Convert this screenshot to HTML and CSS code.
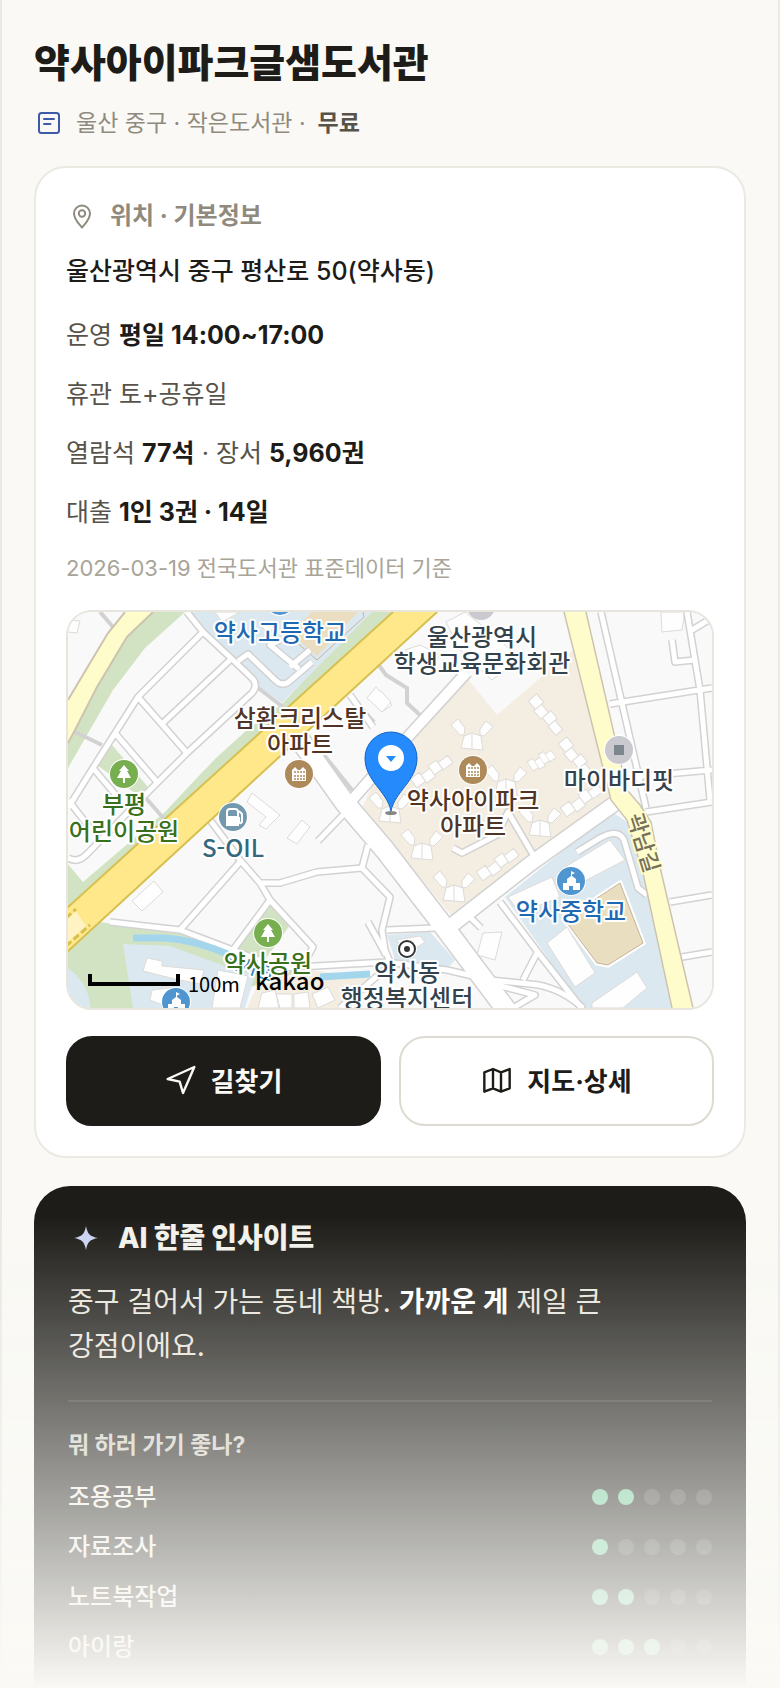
FILE: index.html
```html
<!DOCTYPE html>
<html lang="ko">
<head>
    <meta charset="UTF-8">
    <meta name="viewport" content="width=device-width, initial-scale=1.0">
    <title>약사아이파크글샘도서관</title>
    <link rel="stylesheet" href="styles.css">
</head>
<body>

<main class="page">
    <header class="page-header">
        <h1>약사아이파크글샘도서관</h1>
        <p class="subtitle">
            <svg class="icon" viewBox="0 0 30 30" fill="none" stroke="#3d5aa9" stroke-width="2" stroke-linecap="round">
                <rect x="5" y="5" width="20" height="20" rx="2.500"/>
                <path d="M10 11h10M10 16h6.500"/>
            </svg>
            <span>울산 중구 · 작은도서관 ·</span>
            <strong>무료</strong>
        </p>
    </header>

    <section class="card">
        <h2 class="card-label">
            <svg class="icon" viewBox="0 0 30 30" fill="none" stroke="#8f8a7d" stroke-width="2">
                <path d="M16 26.500C13.500 23.500 8 18.500 8 12.500a8 8 0 0 1 16 0C24 18.500 18.500 23.500 16 26.500z" stroke-linejoin="round"/>
                <circle cx="16" cy="12.500" r="3.200"/>
            </svg>
            위치 · 기본정보
        </h2>
        <p class="address">울산광역시 중구 평산로 50(약사동)</p>
        <div class="info">
            <p>운영 <b>평일 14:00~17:00</b></p>
            <p>휴관 토+공휴일</p>
            <p>열람석 <b>77석</b> · 장서 <b>5,960권</b></p>
            <p>대출 <b>1인 3권 · 14일</b></p>
        </div>
        <p class="source">2026-03-19 전국도서관 표준데이터 기준</p>

        <div class="map">
            <svg class="map-canvas" viewBox="68 612 644 396" preserveAspectRatio="xMidYMid slice" role="img" aria-label="지도">
                <defs>
                    <g id="tower" class="building">
                        <path d="M-8 0L0-3 9 0 11 14-11 12zM0-3V13"/>
                        <path d="M-8-1L-7-8-14-17-21-11-12-1zM8-1L8-7 14-15 21-9 12 0z"/>
                    </g>
                    <g id="row" class="building">
                        <path d="M-22-5H-11V6H-22zM-11-2H0V8H-11zM0-5H10V6H0zM10-2H22V7H10z"/>
                    </g>
                    <g id="school">
                        <circle r="15" fill="#fff"/>
                        <circle r="14" fill="#4f95d0"/>
                        <path d="M-8 9V2h4v-4L0-5V-10l4 2-3 1.500V-5l4 3v4h4V9H2V5H-2v4z" fill="#fff"/>
                    </g>
                    <g id="tree">
                        <circle r="15" fill="#fff"/>
                        <circle r="14" fill="#76ae50"/>
                        <path d="M0-9L5-3H3L7 4H1V9H-1V4H-7L-3-3H-5z" fill="#fff"/>
                    </g>
                    <g id="apt">
                        <circle r="15" fill="#fff"/>
                        <circle r="14" fill="#ae8a5b"/>
                        <path d="M-7 7V-4L-4-7-1-4 1-4 4-7 7-4V7z" fill="#fff"/>
                        <path d="M-5-2H6M-5 2H6M-5 5H6" stroke="#ae8a5b" stroke-width="1.500" stroke-dasharray="2 1"/>
                    </g>
                    <!-- minor streets, stroked twice for the casing -->
                    <g id="streets">
                        <path d="M187 612L203 632 233 660 253 679Q258 686 252 693L187 753 140 800 88 853Q78 864 68 858"/>
                        <path d="M203 632L138 697 93 768 68 808M230 660L163 723M138 697L187 753M115 733L157 782M93 768L120 800M68 800L90 828"/>
                        <path d="M238 661L248 654 275 680Q283 688 291 680L312 662M299 669L270 645 280 640M290 667L310 650"/>
                        <path d="M110 922L180 930 233 950 270 900 313 947 303 965M180 930L240 862M210 820L240 860 260 883 270 900"/>
                        <path d="M260 883L280 883 317 872 362 868 390 897 382 930 385 950 390 962M362 868L368 845M387 930L435 928M368 922L386 955"/>
                        <path d="M318 841L343 815"/>
                        <path d="M233 950L280 968 387 962 447 970 490 980 530 984Q558 986 583 1008M340 1008L390 965M497 985L535 995 513 1008"/>
                        <path d="M500 902L540 955 583 1010M537 953L523 980M468 915L481 928"/>
                        <path d="M577 852L600 838Q618 828 624 840L638 888 647 895"/>
                        <path d="M453 848L462 853 497 835 508 812 535 858"/>
                        <path d="M601 612L646 808M687 612L700 690 710 800M610 704L712 688M632 777L712 770M646 812L712 802M670 902L712 895M682 957L712 952M672 640L675 662 694 660M692 630L712 618"/>
                        <path d="M350 695L373 727"/>
                    </g>
                    <!-- wide streets -->
                    <g id="avenues">
                        <path d="M300 740L345 803 385 850 445 928 508 1012" stroke-width="22"/>
                        <path d="M452 925L530 864 614 804" stroke-width="17"/>
                        <path d="M352 800L405 740 467 672" stroke-width="13"/>
                    </g>
                </defs>

                <rect x="68" y="612" width="644" height="396" fill="#f9f9f9"/>

                <!-- parks and green belts -->
                <g fill="#d2e3c3">
                    <path d="M153 612H185L145 648 113 690 68 768V735L97 678 127 637z"/>
                    <path d="M393 612H367L283 703 247 730 217 757 193 782 165 812 83 882 67 863V910z"/>
                    <path d="M112 745L148 787 140 797 97 765z"/>
                    <path d="M67 950L100 922 180 934 233 952 300 972 240 990 133 1008H67z"/>
                    <path d="M272 903L290 925 262 964 235 950z"/>
                </g>

                <!-- school grounds and public lots -->
                <g fill="#dce8f0">
                    <path d="M187 612H372L282 703 257 685 233 660 203 632z"/>
                    <path d="M505 897L612 812 627 822 643 873 672 1008H583z"/>
                    <path d="M387 935L430 932 455 960 448 968 395 960z"/>
                    <path d="M123 944L170 946 227 967 255 975 245 1008H133z"/>
                    <path d="M68 968Q90 985 90 1008H68z"/>
                </g>
                <path d="M467 678L497 715 573 650 612 800 530 855 452 916 362 808 375 780 410 740z" fill="#f4ede1"/>
                <path d="M257 987L310 970 372 978 350 1008H247z" fill="#f4ede1"/>
                <path d="M312 612H358L317 656 290 633z" fill="#ebdec0"/>
                <path d="M363 612L364 617 317 660 288 635" fill="none" stroke="#c8b49a"/>
                <path d="M620 883L643 943 608 965 597 963 567 923 597 898z" fill="#e9dec0" stroke="#fff" stroke-width="5"/>
                <path d="M620 883L643 943 608 965 597 963 567 923 597 898z" fill="#e9dec0" stroke="#c8b49a"/>

                <!-- buildings -->
                <g class="building">
                    <path d="M68 620L80 621 77 633 68 632zM215 612L222 622 240 612zM260 625L268 633 280 622zM376 687L392 705 382 712 367 698z"/>
                    <path d="M252 793L280 815 266 829 259 825 266 817 247 802zM302 820L310 827 297 844 287 838zM154 881L163 892 142 911 132 901z"/>
                    <path d="M661 612H685L682 630 662 632zM446 622L465 612 500 640 520 660 492 680 460 650zM405 650L420 645 440 655 430 668zM380 690L391 702 383 711"/>
                    <path d="M508 897L552 877 560 897 520 913zM560 870L610 840 625 860 575 886zM547 943L567 927 595 973 575 987zM592 1003L637 972 647 988 623 1008H592z"/>
                    <path d="M483 933L502 932 495 960 477 955zM396 940L420 936 425 942 410 952z"/>
                    <path d="M147 958L162 961 162 966 204 970 200 984 175 979 143 971zM152 990L170 988 170 1008 150 1000zM218 970L248 976 240 1008H212z"/>
                    <path d="M262 993L275 990 280 1008H258zM276 994L292 994 292 1008H279zM294 994L308 992 310 1008H294zM312 994L328 987 335 1000 318 1008z"/>
                </g>
                <use href="#tower" x="472" y="736"/>
                <use href="#tower" x="506" y="782"/>
                <use href="#tower" x="540" y="823"/>
                <use href="#tower" x="422" y="846"/>
                <use href="#tower" x="454" y="888"/>
                <use href="#tower" x="390" y="809"/>
                <use href="#row" transform="translate(547 714) rotate(50)"/>
                <use href="#row" transform="translate(577 757) rotate(50)"/>
                <use href="#row" transform="translate(431 770) rotate(-36)"/>
                <use href="#row" transform="translate(497 863) rotate(-36)"/>
                <use href="#row" transform="translate(581 799) rotate(-36)"/>
                <use href="#row" transform="translate(541 759) rotate(-32) scale(.6 1)"/>

                <!-- footpaths -->
                <path d="M75 732L102 745M100 612L113 627M145 797L165 820M257 687L283 707M373 657L386 675 407 688V703L420 715M354 700L374 722M320 750L352 790Q358 794 366 788" fill="none" stroke="#d2d2d2" stroke-width="4"/>

                <use href="#streets" class="street-casing"/>
                <use href="#avenues" class="street-fill" stroke="#d2d2d2"/>
                <use href="#streets" class="street-line"/>
                <g fill="none" stroke="#fff" stroke-linejoin="round">
                    <path d="M300 740L345 803 385 850 445 928 508 1012" stroke-width="19"/>
                    <path d="M452 925L530 864 614 804" stroke-width="14"/>
                    <path d="M352 800L405 740 467 672" stroke-width="10"/>
                </g>

                <!-- stream -->
                <path d="M133 938H165Q195 940 230 955L262 974M320 977L370 974" fill="none" stroke="#a3d6ec" stroke-width="7"/>

                <!-- main roads -->
                <path d="M125 612L108 633 90 663 68 700V743L75 730 97 687 127 637 153 612z" fill="#fffccb"/>
                <path d="M125 612L108 633 90 663 68 700M68 743L75 730 97 687 127 637 153 612" fill="none" stroke="#cdc4b0" stroke-width="2"/>
                <path d="M564 612L611 800 627 820 643 873 672 1008H693L660 867 651 822 640 805 627 790 586 612z" fill="#fffccb"/>
                <path d="M564 612L611 800 627 820 643 873 672 1008M693 1008L660 867 651 822 640 805 627 790 586 612" fill="none" stroke="#cdc4b0" stroke-width="1.500"/>
                <path d="M393 612L67 908V952L437 612z" fill="#ffe88a"/>
                <path d="M393 612L67 908M67 952L437 612" fill="none" stroke="#d6c052" stroke-width="2"/>
                <path d="M68 918L76 911 86 926 68 942z" fill="#fff3c4"/>
                <path d="M66 918L76 909M66 946L90 925" fill="none" stroke="#d6c052" stroke-width="3" stroke-dasharray="7 3"/>

                <!-- place markers -->
                <use href="#school" x="280" y="601"/>
                <circle cx="481" cy="606" r="14" fill="#cac9d0"/>
                <use href="#apt" x="299" y="774"/>
                <use href="#apt" x="473" y="770"/>
                <use href="#tree" x="124" y="774"/>
                <use href="#tree" x="268" y="933"/>
                <use href="#school" x="571" y="881"/>
                <use href="#school" x="176" y="1002"/>
                <circle cx="619" cy="750" r="15" fill="#fff"/>
                <circle cx="619" cy="750" r="14" fill="#cac9d0"/>
                <rect x="614" y="745" width="10" height="10" fill="#7b878d"/>
                <circle cx="233" cy="817" r="15" fill="#fff"/>
                <circle cx="233" cy="817" r="14" fill="#7299ad"/>
                <path d="M227 825V812q0-3 3-3h5q3 0 3 3v13zM239 811l3 3v8q-2 3-3-1v-4" fill="none" stroke="#fff" stroke-width="2"/>
                <path d="M228 816h9v8h-9z" fill="#fff"/>
                <circle cx="407" cy="949" r="10" fill="#fff"/>
                <circle cx="407" cy="949" r="8" fill="#fff" stroke="#333" stroke-width="2"/>
                <circle cx="407" cy="949" r="3" fill="#333"/>

                <!-- labels -->
                <g class="place">
                    <text x="280" y="641" fill="#1f68b2">약사고등학교</text>
                    <text x="482" y="646" fill="#34434b">울산광역시</text>
                    <text x="482" y="672" fill="#34434b">학생교육문화회관</text>
                    <text x="300" y="727" fill="#503526">삼환크리스탈</text>
                    <text x="300" y="753" fill="#503526">아파트</text>
                    <text x="473" y="809" fill="#503526">약사아이파크</text>
                    <text x="473" y="835" fill="#503526">아파트</text>
                    <text x="619" y="789" fill="#34434b">마이바디핏</text>
                    <text x="124" y="813" fill="#39701b">부평</text>
                    <text x="124" y="840" fill="#39701b">어린이공원</text>
                    <text x="233" y="857" fill="#34687f">S-OIL</text>
                    <text x="571" y="920" fill="#1f68b2">약사중학교</text>
                    <text x="248" y="973" fill="#3f86b8" class="place-small" transform="rotate(18 248 973)">약사천</text>
                    <text x="268" y="972" fill="#39701b">약사공원</text>
                    <text x="407" y="981" fill="#34434b">약사동</text>
                    <text x="407" y="1007" fill="#34434b">행정복지센터</text>
                    <text x="636" y="845" fill="#77705a" class="place-road" transform="rotate(73 636 845)">곽남길</text>
                </g>

                <!-- scale and provider -->
                <path d="M90 974V984H178V974" fill="none" stroke="#000" stroke-width="4"/>
                <text x="188" y="992" class="map-scale">100m</text>
                <text x="255" y="990" class="map-brand">kakao</text>

                <!-- selected location -->
                <ellipse cx="391" cy="813" rx="6" ry="2" fill="#555" opacity=".7"/>
                <path d="M391 811C387 791 365 781 365 758a26 26 0 0 1 52 0C417 781 395 791 391 811z" fill="#258bfc" stroke="#1463c4"/>
                <circle cx="391" cy="758" r="13" fill="#fff"/>
                <path d="M386 756h10l-5 6z" fill="#258bfc"/>
            </svg>
        </div>

        <div class="actions">
            <button type="button" class="button button-dark">
                <svg class="icon-large" viewBox="0 0 24 24" fill="none" stroke="currentColor" stroke-width="1.800" stroke-linejoin="round">
                    <path d="M2 12L22 3 13.500 22.500 11 14z"/>
                </svg>
                길찾기
            </button>
            <button type="button" class="button">
                <svg class="icon-large" viewBox="0 0 24 24" fill="none" stroke="currentColor" stroke-width="1.800" stroke-linejoin="round">
                    <path d="M2.500 7L9 4.500 15 7 21.500 4.500V19L15 21.500 9 19 2.500 21.500zM9 4.500V19M15 7V21.500"/>
                </svg>
                지도·상세
            </button>
        </div>
    </section>

    <section class="insight">
        <h2 class="insight-title">
            <svg class="icon-large" viewBox="0 0 32 32" fill="#cad3f2">
                <path d="M16 4C17.500 12 20 14.500 28 16 20 17.500 17.500 20 16 28 14.500 20 12 17.500 4 16 12 14.500 14.500 12 16 4z"/>
            </svg>
            AI 한줄 인사이트
        </h2>
        <p class="insight-text">중구 걸어서 가는 동네 책방. <b>가까운 게</b> 제일 큰 강점이에요.</p>
        <h3>뭐 하러 가기 좋나?</h3>
        <ul class="ratings">
            <li>조용공부 <span class="dots"><i class="on"></i><i class="on"></i><i></i><i></i><i></i></span></li>
            <li>자료조사 <span class="dots"><i class="on"></i><i></i><i></i><i></i><i></i></span></li>
            <li>노트북작업 <span class="dots"><i class="on"></i><i class="on"></i><i></i><i></i><i></i></span></li>
            <li>아이랑 <span class="dots"><i class="on"></i><i class="on"></i><i class="on"></i><i></i><i></i></span></li>
        </ul>
    </section>
</main>

<div class="fade"></div>

</body>
</html>
```
FILE: styles.css
```css
* {
    box-sizing: border-box;
    margin: 0;
    padding: 0;
}

body {
    font-family: Inter, 'Noto Sans CJK KR', sans-serif;
    background-color: #faf9f5;
    color: #1d1c18;
    font-size: 24px;
    line-height: 40px;
    word-break: keep-all;
}

.page {
    max-width: 860px;
    margin: auto;
    padding: 39px 32px 0;
    border-left: 2px solid #eae9e2;
    border-right: 2px solid #eae9e2;
}

h1 {
    font-size: 39px;
    line-height: 48px;
    font-weight: 800;
}

.icon {
    width: 30px;
    height: 30px;
    flex: none;
}

.icon-large {
    width: 32px;
    height: 32px;
    flex: none;
}

.subtitle {
    display: flex;
    align-items: center;
    gap: 12px;
    margin-top: 16px;
    font-size: 23px;
    color: #8f8a7d;
}

.subtitle strong {
    color: #57534a;
    font-weight: 600;
}

.card {
    margin-top: 23px;
    padding: 28px 30px 30px;
    background-color: white;
    border: 2px solid #eae9e2;
    border-radius: 32px;
}

.card-label {
    display: flex;
    align-items: center;
    gap: 14px;
    font-size: 24px;
    font-weight: 700;
    color: #8f8a7d;
}

.address {
    margin-top: 15px;
    font-size: 25px;
    font-weight: 500;
}

.info {
    display: flex;
    flex-direction: column;
    gap: 19px;
    margin-top: 24px;
    font-size: 25px;
    color: #57534a;
}

.info b {
    color: #1d1c18;
}

.source {
    margin-top: 16px;
    font-size: 22px;
    color: #a8a498;
}

.map {
    margin-top: 22px;
    border: 2px solid #e8e5df;
    border-radius: 26px;
    overflow: hidden;
}

.map-canvas {
    display: block;
    width: 100%;
}

.building {
    fill: #fefefe;
    stroke: #dddbd8;
    stroke-width: 1;
}

.street-casing,
.street-line,
.street-fill {
    fill: none;
    stroke-linejoin: round;
}

.street-casing {
    stroke: #d2d2d2;
    stroke-width: 8px;
}

.street-line {
    stroke: white;
    stroke-width: 5px;
}

.place {
    font-family: 'Noto Sans CJK KR', sans-serif;
    font-size: 24px;
    font-weight: 500;
    text-anchor: middle;
    stroke: white;
    stroke-width: 4px;
    stroke-linejoin: round;
    paint-order: stroke;
}

.place-small {
    font-size: 18px;
}

.place-road {
    font-size: 22px;
    stroke: #fffccb;
}

.map-scale {
    font-family: 'Noto Sans CJK KR', sans-serif;
    font-size: 20px;
}

.map-brand {
    font-family: 'Noto Sans CJK KR', sans-serif;
    font-size: 24px;
    font-weight: 500;
}

.actions {
    display: grid;
    grid-template-columns: 1fr 1fr;
    gap: 18px;
    margin-top: 26px;
}

.button {
    display: flex;
    align-items: center;
    justify-content: center;
    gap: 14px;
    height: 90px;
    padding-bottom: 4px;
    border: 2px solid #dddad1;
    border-radius: 26px;
    background-color: white;
    color: #1d1c18;
    font-family: inherit;
    font-size: 26px;
    font-weight: 700;
    cursor: pointer;
}

.button-dark {
    background-color: #1d1c18;
    border-color: #1d1c18;
    color: #faf9f5;
}

.insight {
    margin-top: 28px;
    padding: 32px 34px 24px;
    background-color: #1d1c18;
    border-radius: 36px 36px 0 0;
    color: #f3f1eb;
}

.insight-title {
    display: flex;
    align-items: center;
    gap: 16px;
    padding-left: 2px;
    font-size: 28px;
    font-weight: 800;
}

.insight-text {
    margin-top: 22px;
    padding-bottom: 32px;
    border-bottom: 2px solid #33322e;
    font-size: 28px;
    line-height: 44px;
    color: #e8e5dc;
}

.insight-text b {
    color: white;
}

.insight h3 {
    margin-top: 23px;
    font-size: 23px;
    font-weight: 700;
    color: #cfccc2;
}

.ratings {
    display: flex;
    flex-direction: column;
    gap: 10px;
    margin-top: 12px;
    list-style: none;
    font-weight: 500;
}

.ratings li {
    display: flex;
    align-items: center;
    justify-content: space-between;
}

.dots {
    display: flex;
    gap: 10px;
}

.dots i {
    width: 16px;
    height: 16px;
    border-radius: 50%;
    background-color: #3d3c38;
}

.dots .on {
    background-color: #6fcb9b;
}

/* content fades out towards the bottom of the screen */
.fade {
    position: fixed;
    left: 0;
    right: 0;
    bottom: 0;
    height: 28vh;
    background: linear-gradient(rgba(250, 249, 245, 0), #faf9f5);
    pointer-events: none;
}
```
